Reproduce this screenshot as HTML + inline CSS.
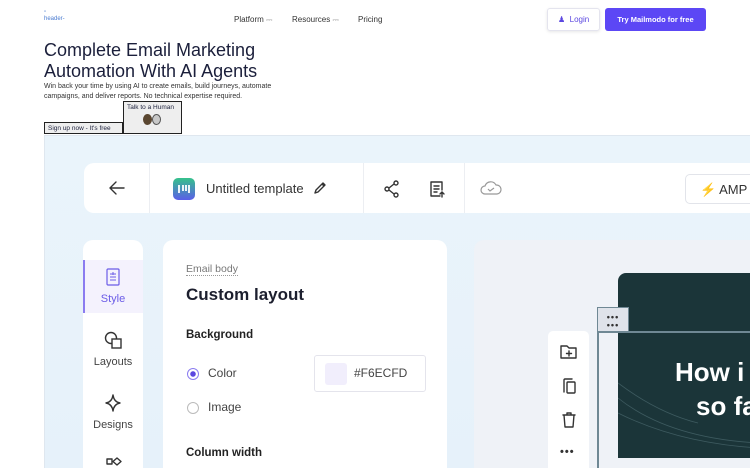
<!DOCTYPE html>
<html><head><meta charset="utf-8"><style>
*{margin:0;padding:0;box-sizing:border-box}
html,body{width:750px;height:468px;overflow:hidden}
body{background:#fff;font-family:"Liberation Sans",sans-serif;position:relative;color:#1b1f3b}
.a{position:absolute}
.nav{font-size:8px;color:#333;top:15px}
.ic{stroke:#333;fill:none;stroke-width:1.4;stroke-linecap:round;stroke-linejoin:round}
</style></head><body>
<div class="a" style="left:44px;top:9px;font-size:6px;color:#4a7bd0;line-height:7px">▫<br>header-</div>
<div class="a nav" style="left:234px">Platform <span style="color:#aaa">⎓</span></div>
<div class="a nav" style="left:292px">Resources <span style="color:#aaa">⎓</span></div>
<div class="a nav" style="left:358px">Pricing</div>
<div class="a" style="left:547px;top:8px;width:53px;height:23px;border:1px solid #e4e4ee;border-radius:3px;box-shadow:0 1px 3px rgba(0,0,0,.1);font-size:8px;color:#5b47e0;padding:6px 0 0 10px">&#9823;&nbsp; Login</div>
<div class="a" style="left:605px;top:8px;width:101px;height:23px;background:#5c47f5;border-radius:3px;font-size:7.5px;font-weight:bold;color:#fff;text-align:center;line-height:23px">Try Mailmodo for free</div>
<div class="a" style="left:44px;top:40px;font-size:18px;line-height:21px;color:#1b1f3b">Complete Email Marketing<br>Automation With AI Agents</div>
<div class="a" style="left:44px;top:82px;font-size:7px;line-height:10px;color:#333">Win back your time by using AI to create emails, build journeys, automate<br>campaigns, and deliver reports. No technical expertise required.</div>
<div class="a" style="left:44px;top:122px;width:79px;height:12px;border:1px solid #222;background:#eee;font-size:6.5px;padding:2px 3px">Sign up now - It's free</div>
<div class="a" style="left:123px;top:101px;width:59px;height:33px;border:1px solid #222;background:#eee;font-size:6.5px;padding:2px 3px">Talk to a Human
<div style="margin:3px 0 0 16px;display:flex"><span style="width:9px;height:11px;border-radius:50%;background:#5a4630;display:block"></span><span style="width:9px;height:11px;border-radius:50%;background:#c8c8c8;border:1px solid #555;display:block"></span></div></div>
<div class="a" style="left:44px;top:135px;width:706px;height:333px;background:linear-gradient(180deg,#eaf4fb,#e6f1fa);border-left:1px solid #dfe7ef;border-top:1px solid #dfe7ef"></div>
<div class="a" style="left:84px;top:163px;width:680px;height:50px;background:#fff;border-radius:10px"></div>
<div class="a" style="left:149px;top:163px;width:1px;height:50px;background:#eceef2"></div>
<div class="a" style="left:363px;top:163px;width:1px;height:50px;background:#eceef2"></div>
<div class="a" style="left:464px;top:163px;width:1px;height:50px;background:#eceef2"></div>
<svg class="a" style="left:108px;top:180px" width="18" height="16"><path class="ic" d="M16 8H2M8 2L2 8l6 6" stroke-width="1.6"/></svg>
<div class="a" style="left:173px;top:178px;width:22px;height:22px;border-radius:5px;background:linear-gradient(180deg,#35c28b,#5b5ee8)"><svg width="22" height="22"><path d="M6 7v8M10 7v6M13 7v6M16 7v8" stroke="#fff" stroke-width="1.8" fill="none"/></svg></div>
<div class="a" style="left:206px;top:181px;font-size:13px;color:#333">Untitled template</div>
<svg class="a" style="left:313px;top:181px" width="14" height="14"><path class="ic" d="M2 12l1-3 7-7 2 2-7 7zM9 3l2 2"/></svg>
<svg class="a" style="left:384px;top:180px" width="16" height="18"><circle class="ic" cx="12" cy="3" r="2"/><circle class="ic" cx="3" cy="9" r="2"/><circle class="ic" cx="12" cy="15" r="2"/><path class="ic" d="M5 8l5-4M5 10l5 4"/></svg>
<svg class="a" style="left:429px;top:180px" width="16" height="18"><path class="ic" d="M11 16H2V2h11v8M5 6h5M5 9h5M5 12h3M13 12v5M11 14l2-2 2 2"/></svg>
<svg class="a" style="left:479px;top:180px" width="24" height="16"><path d="M6 14a4 4 0 010-8 6 6 0 0111-1 4.5 4.5 0 011 9z" stroke="#999" fill="none" stroke-width="1.2"/><path d="M9 9l2 2 4-3" stroke="#999" fill="none" stroke-width="1.2"/></svg>
<div class="a" style="left:685px;top:174px;width:80px;height:30px;border:1px solid #e2e4ea;border-radius:5px;font-size:13px;color:#333;padding:7px 0 0 14px">⚡ AMP</div>
<div class="a" style="left:83px;top:240px;width:60px;height:228px;background:#fff;border-radius:10px 10px 0 0;overflow:hidden">
<div style="position:absolute;left:0;top:20px;width:60px;height:53px;background:#f4f2fd;border-left:2px solid #8b7cf0"></div>
<svg class="a" style="left:23px;top:28px" width="14" height="18"><rect x="1" y="1" width="12" height="16" rx="1" stroke="#6b5ce7" fill="none" stroke-width="1.2"/><path d="M4 6h6M4 9h6M4 12h6M7 4v3" stroke="#6b5ce7" stroke-width="1"/></svg>
<div class="a" style="top:53px;width:60px;text-align:center;font-size:11px;color:#6b5ce7">Style</div>
<svg class="a" style="left:21px;top:90px" width="20" height="20"><circle class="ic" cx="7" cy="8" r="5.5"/><rect x="8" y="9" width="9" height="9" fill="#fff" stroke="#333" stroke-width="1.4"/></svg>
<div class="a" style="top:116px;width:60px;text-align:center;font-size:11px;color:#444">Layouts</div>
<svg class="a" style="left:21px;top:154px" width="18" height="18"><path class="ic" d="M9 1q1 7 7 8-6 1-7 8-1-7-7-8 6-1 7-8z"/></svg>
<div class="a" style="top:179px;width:60px;text-align:center;font-size:11px;color:#444">Designs</div>
<svg class="a" style="left:23px;top:217px" width="16" height="10"><rect x="1" y="2" width="5" height="5" class="ic"/><path class="ic" d="M11 1l4 3.5-4 3.5-4-3.5z"/></svg>
</div>
<div class="a" style="left:163px;top:240px;width:284px;height:228px;background:#fff;border-radius:10px 10px 0 0"></div>
<div class="a" style="left:186px;top:263px;font-size:10.5px;color:#777;border-bottom:1px dotted #999;line-height:12px">Email body</div>
<div class="a" style="left:186px;top:285px;font-size:17px;font-weight:bold;color:#1c1f2e">Custom layout</div>
<div class="a" style="left:186px;top:329px;font-size:11.5px;font-weight:bold;color:#222">Background</div>
<div class="a" style="left:187px;top:368px;width:12px;height:12px;border-radius:50%;border:1px solid #8b7cf0;background:radial-gradient(#5b47e0 2.5px,transparent 3px)"></div>
<div class="a" style="left:208px;top:366px;font-size:12px;color:#444">Color</div>
<div class="a" style="left:187px;top:402px;width:12px;height:12px;border-radius:50%;border:1px solid #bbb"></div>
<div class="a" style="left:208px;top:400px;font-size:12px;color:#444">Image</div>
<div class="a" style="left:314px;top:355px;width:112px;height:37px;border:1px solid #e4e4ec;border-radius:3px"></div>
<div class="a" style="left:325px;top:363px;width:22px;height:22px;background:#f1eefc;border-radius:3px"></div>
<div class="a" style="left:354px;top:366px;font-size:12px;color:#444">#F6ECFD</div>
<div class="a" style="left:186px;top:447px;font-size:11.5px;font-weight:bold;color:#222">Column width</div>
<div class="a" style="left:474px;top:240px;width:290px;height:228px;background:#eff2f7;border-radius:10px 10px 0 0"></div>
<div class="a" style="left:618px;top:273px;width:140px;height:185px;background:#1b3539;border-radius:8px 0 0 0;overflow:hidden">
<svg width="140" height="185" style="position:absolute;left:0;top:0"><path d="M0 110q40 30 80 40M0 125q50 40 140 45M0 140q60 30 140 35" stroke="#3d5a5f" fill="none" stroke-width="0.8"/></svg>
<div style="position:absolute;left:57px;top:84px;font-size:26px;font-weight:bold;color:#fff;white-space:nowrap">How i</div>
<div style="position:absolute;left:78px;top:118px;font-size:26px;font-weight:bold;color:#fff;white-space:nowrap">so fa</div>
</div>
<div class="a" style="left:597px;top:331px;width:160px;height:1.5px;background:#6f8894"></div>
<div class="a" style="left:597px;top:307px;width:1.5px;height:161px;background:#6f8894"></div>
<div class="a" style="left:597px;top:307px;width:32px;height:25px;background:#dfe3ea;border:1px solid #6f8894;font-size:9px;text-align:center;line-height:8px;padding-top:5px;letter-spacing:1px;font-weight:bold;color:#333">•••<br>•••</div>
<div class="a" style="left:548px;top:331px;width:41px;height:137px;background:#fff;border-radius:5px 5px 0 0"></div>
<svg class="a" style="left:560px;top:344px" width="18" height="16"><path class="ic" d="M1 2h6l2 2h7v10H1z"/><path class="ic" d="M9 7v5M6.5 9.5h5"/></svg>
<svg class="a" style="left:561px;top:377px" width="16" height="18"><path class="ic" d="M3 15V3a1 1 0 011-1h7"/><rect x="6" y="5" width="8" height="11" rx="1" class="ic"/></svg>
<svg class="a" style="left:561px;top:412px" width="16" height="16"><path class="ic" d="M2 3h12M6 3V1h4v2M3 3l1 12h8l1-12"/></svg>
<div class="a" style="left:560px;top:446px;font-size:11px;font-weight:bold;color:#333;letter-spacing:1px">•••</div>
</body></html>
